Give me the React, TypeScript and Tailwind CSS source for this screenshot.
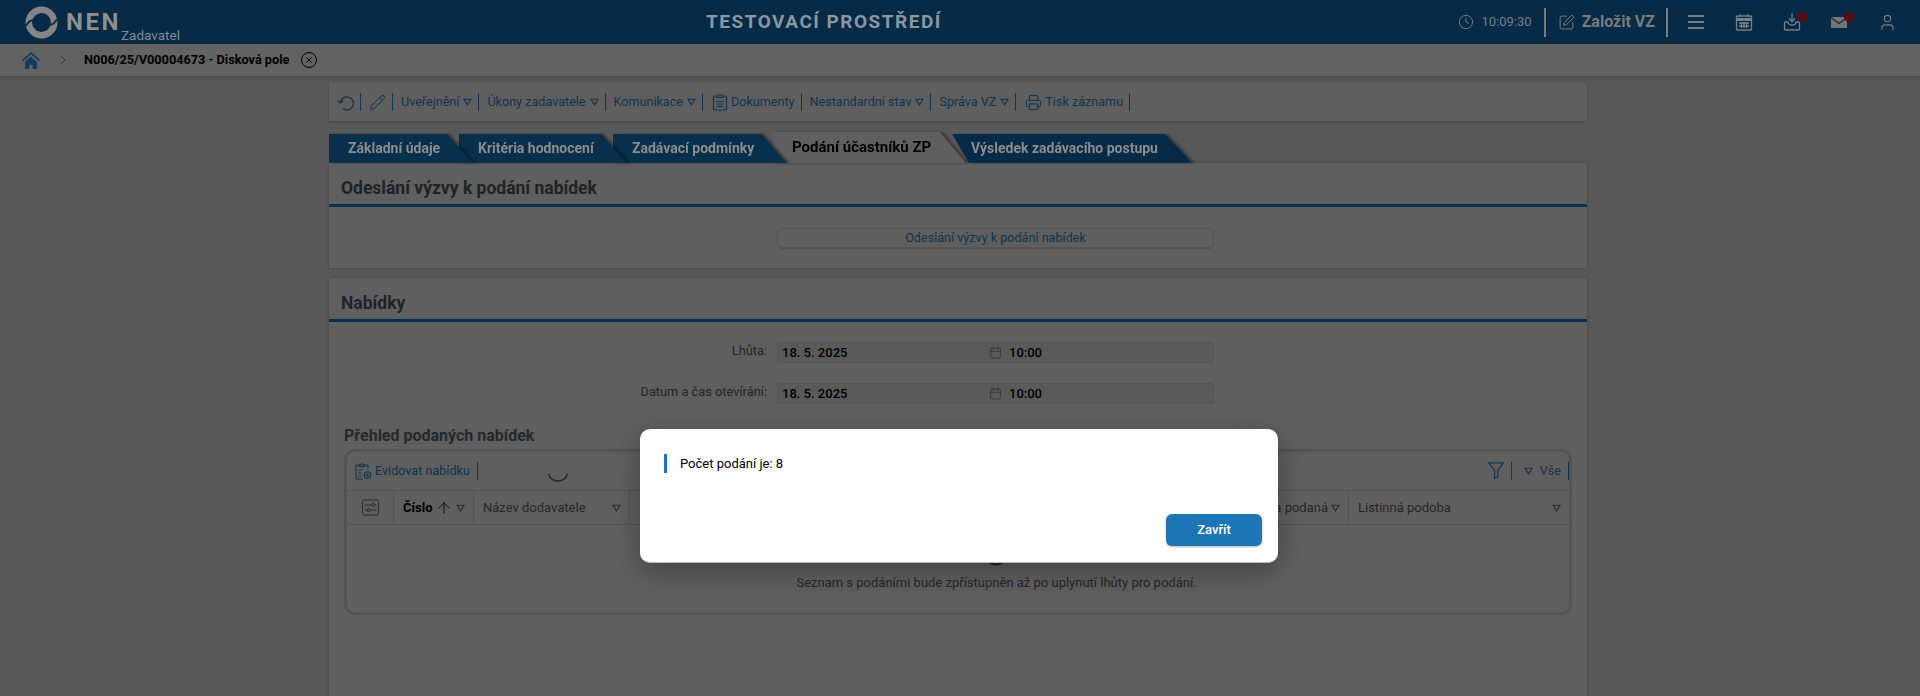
import React from 'react';
import { Clock, SquarePen, User, ChevronRight, Pencil, Printer, ArrowUp, Calendar, X } from 'lucide-react';

const Tri = ({ className = 'text-[#10344e]' }: { className?: string }) => (
  <svg width="9" height="8" viewBox="0 0 9 8" className={className} fill="none" stroke="currentColor" strokeWidth="1.1">
    <path d="M1 1.2h7L4.5 7z" />
  </svg>
);

const Sep = ({ ml = 'ml-[6px]' }: { ml?: string }) => <span className={`${ml} w-px h-[18px] bg-[#10344e]`} />;

const RefreshIcon = () => (
  <svg width="17" height="17" viewBox="0 0 17 17" fill="none" stroke="currentColor" strokeWidth="1.2">
    <path d="M3.5 9A6.5 6.5 0 1 1 6 14.5" />
    <path d="M1 6.5L3.5 9 6 6.5" />
  </svg>
);

const ClipIcon = () => (
  <svg width="16" height="18" viewBox="0 0 16 18" fill="none" stroke="currentColor" strokeWidth="1.2">
    <path d="M5 3H2.5a1 1 0 0 0-1 1v12a1 1 0 0 0 1 1h11a1 1 0 0 0 1-1V4a1 1 0 0 0-1-1H11" />
    <path d="M5 4.5V3h1.5a1.5 1.5 0 0 1 3 0H11v1.5zM4.5 8.5h7M4.5 11h7M4.5 13.5h7" />
  </svg>
);

const EvidIcon = () => (
  <svg width="17" height="18" viewBox="0 0 17 18" fill="none" stroke="currentColor" strokeWidth="1.1">
    <path d="M4.5 3H2a1 1 0 0 0-1 1v12a1 1 0 0 0 1 1h6M9.5 3H12a1 1 0 0 1 1 1v3.5" />
    <path d="M4.5 4.5V3H6a1.2 1.2 0 0 1 2.4 0h1.1v1.5zM3.5 8h4M3.5 11h3M3.5 14h3" />
    <circle cx="12.5" cy="13" r="3.2" />
    <circle cx="12.5" cy="13" r="1" />
  </svg>
);

const FilterIcon = () => (
  <svg width="16" height="17" viewBox="0 0 16 17" fill="none" stroke="currentColor" strokeWidth="1.2">
    <path d="M0.8 1h14.4L9.8 8.5V15L6.6 16.5V8.5z" />
  </svg>
);

const ColumnsIcon = () => (
  <svg width="17" height="17" viewBox="0 0 17 17" fill="none" stroke="#2c2c2c" strokeWidth="1">
    <rect x="0.5" y="1" width="16" height="15" rx="1.5" />
    <path d="M3 6h6.5M13 6h1.5M3 11h1.5M8 11h6.5" />
    <circle cx="11.2" cy="6" r="1.5" />
    <circle cx="6.2" cy="11" r="1.5" />
  </svg>
);

const tabs = [
  { label: 'Základní údaje', w: 'w-[144px]', z: 'z-50' },
  { label: 'Kritéria hodnocení', w: 'w-[168px]', z: 'z-40' },
  { label: 'Zadávací podmínky', w: 'w-[174px]', z: 'z-30' },
];

const Panel = ({ title, children, className }: { title: string; children: React.ReactNode; className: string }) => (
  <section className={`bg-[#5f5f5f] shadow-[0_0_3px_rgba(0,0,0,0.25)] ${className}`}>
    <div className="h-[30px] pl-3 pt-[11px] flex items-center border-b-[3px] border-[#08304c] box-content">
      <h2 className="text-[17.5px] font-bold text-[#1e2328] leading-none">{title}</h2>
    </div>
    {children}
  </section>
);

const DateRow = ({ label, mt }: { label: string; mt: string }) => (
  <div className={`flex items-center ${mt}`}>
    <span className="w-[438px] text-right text-[12.8px] text-[#262626] -mt-1">{label}</span>
    <div className="ml-[10px] w-[437px] h-[21px] rounded-[3px] border border-[#545454] bg-[#5a5a5a] flex items-center pl-[4px] text-[13px] font-medium text-black">
      <span className="w-[207px]">18. 5. 2025</span>
      <Calendar size={13} strokeWidth={1.2} className="text-[#2c2c2c]" />
      <span className="ml-[7px]">10:00</span>
    </div>
  </div>
);

const Col = ({ w, children, bold }: { w: string; children: React.ReactNode; bold?: boolean }) => (
  <div className={`${w} h-full flex items-center border-r border-[#525452] pl-[9px] pr-2 text-[13px] ${bold ? 'font-bold text-black' : 'text-[#262626]'}`}>
    {children}
  </div>
);

export default function App() {
  return (
    <div className="relative h-[696px] w-full overflow-hidden bg-[#585858] font-['Roboto',sans-serif]">
      {/* header */}
      <header className="h-11 bg-[#072b47] flex items-center text-[#747f87]">
        <div className="w-[190px] flex items-center pl-[25px] relative h-full">
          <svg width="33" height="33" viewBox="0 0 33 33" fill="none">
            <circle cx="16.5" cy="16.5" r="12.7" stroke="#858585" strokeWidth="6.6" />
            <path d="M1 20C3 16 5 14 9 14" stroke="#072b47" strokeWidth="1.8" />
            <path d="M32 13C30 17 28 19 24 19" stroke="#072b47" strokeWidth="1.8" />
          </svg>
          <span className="ml-2 text-[24px] font-bold tracking-[2.5px] leading-none text-[#909090]">NEN</span>
          <span className="absolute left-[121px] top-[27px] text-[13.5px] leading-4 text-[#7d8a94]">Zadavatel</span>
        </div>
        <div className="ml-[516px] w-[240px] text-[19px] font-bold tracking-[1.5px] text-[#8a96a0] whitespace-nowrap">TESTOVACÍ PROSTŘEDÍ</div>
        <div className="ml-auto flex items-center h-full">
          <Clock size={16} strokeWidth={1.4} />
          <span className="ml-2 text-[13px]">10:09:30</span>
          <span className="ml-3 w-0.5 h-[29px] bg-[#7a7a7a]" />
          <SquarePen size={17} strokeWidth={1.4} className="ml-3" />
          <span className="ml-[7px] text-[16px] font-bold text-[#7a7a7a]">Založit VZ</span>
          <span className="ml-[11px] w-0.5 h-[29px] bg-[#7a7a7a]" />
          <svg width="20" height="20" viewBox="0 0 20 20" className="ml-[18px]" stroke="currentColor" strokeWidth="2">
            <path d="M2 4h16M2 10h16M2 16h16" />
          </svg>
          <svg width="18" height="18" viewBox="0 0 18 18" className="ml-[29px]" fill="none" stroke="currentColor" strokeWidth="1.3">
            <rect x="1.5" y="3" width="15" height="14" rx="1" />
            <path d="M1.5 6.5h15" strokeWidth="3" />
            <path d="M5 1v3M13 1v3M4 10h10M4 13h10M6.5 9v6M9 9v6M11.5 9v6" />
          </svg>
          <div className="relative ml-[30px] w-[18px] h-[18px]">
            <svg width="18" height="18" viewBox="0 0 18 18" fill="none" stroke="currentColor" strokeWidth="1.3">
              <path d="M9 0v8M6 5.5l3 3 3-3" />
              <path d="M5 9H2.5a1 1 0 0 0-1 1v6a1 1 0 0 0 1 1h13a1 1 0 0 0 1-1v-6a1 1 0 0 0-1-1H13c0 2-2 3-4 3s-4-1-4-3z" />
            </svg>
            <span className="absolute -right-[6px] -top-[1px] w-[10px] h-[10px] rounded-full bg-[#5a0e12]" />
          </div>
          <div className="relative ml-[29px] w-[18px] h-[18px]">
            <svg width="18" height="18" viewBox="0 0 18 18">
              <path d="M1 4h16v11H1z" fill="#747474" />
              <path d="M1 4.5l8 6 8-6" fill="none" stroke="#072b47" strokeWidth="1.2" />
            </svg>
            <span className="absolute -right-[6px] -top-[1px] w-[10px] h-[10px] rounded-full bg-[#5a0e12]" />
          </div>
          <User size={19} strokeWidth={1.4} className="ml-[30px] mr-[23px]" />
        </div>
      </header>

      {/* breadcrumb */}
      <nav className="h-8 bg-[#626262] flex items-center shadow-[0_2px_4px_rgba(0,0,0,0.15)] relative">
        <svg width="18" height="17" viewBox="0 0 17 16" className="ml-[22px] text-[#0c3c60]" fill="currentColor">
          <path d="M8.5 0L0 7.6l1 1.1 7.5-6.6 7.5 6.6 1-1.1zM3 9.2V16h4v-4h3v4h4V9.2L8.5 4.4z" />
        </svg>
        <ChevronRight size={16} strokeWidth={1.1} className="ml-[15px] text-[#2c2c2c]" />
        <span className="ml-[13px] text-[12.7px] font-bold text-black">N006/25/V00004673 - Disková pole</span>
        <span className="ml-[12px] w-4 h-4 rounded-full border border-black flex items-center justify-center">
          <X size={10} strokeWidth={2} className="text-black" />
        </span>
      </nav>

      {/* content */}
      <main className="ml-[329px] w-[1258px] pt-[7px]">
        <div className="h-[38px] bg-[#5f5f5f] shadow-[0_1px_2px_rgba(0,0,0,0.2)] flex items-center text-[12.6px] text-[#10344e] pl-2">
          <RefreshIcon />
          <Sep />
          <Pencil size={17} strokeWidth={1.4} className="ml-2" />
          <Sep />
          <span className="ml-[8px]">Uveřejnění</span><span className="ml-1"><Tri /></span>
          <Sep />
          <span className="ml-[8px]">Úkony zadavatele</span><span className="ml-1"><Tri /></span>
          <Sep />
          <span className="ml-[8px]">Komunikace</span><span className="ml-1"><Tri /></span>
          <Sep />
          <span className="ml-[9px]"><ClipIcon /></span>
          <span className="ml-[3px]">Dokumenty</span>
          <Sep />
          <span className="ml-[8px]">Nestandardní stav</span><span className="ml-1"><Tri /></span>
          <Sep />
          <span className="ml-[8px]">Správa VZ</span><span className="ml-1"><Tri /></span>
          <Sep />
          <Printer size={17} strokeWidth={1.4} className="ml-[9px]" />
          <span className="ml-[3px]">Tisk záznamu</span>
          <Sep />
        </div>

        {/* tabs */}
        <div className="mt-[11px] h-[31px] flex items-end relative">
          {tabs.map((t, i) => (
            <div key={t.label} className={`relative ${t.z} ${i > 0 ? '-ml-[14px]' : ''} drop-shadow-[3px_0_1px_rgba(0,0,0,0.35)]`}>
              <div className={`${t.w} h-[29px] bg-[#08304c] [clip-path:polygon(0_0,calc(100%-26px)_0,100%_100%,0_100%)] flex items-center pl-[19px] text-[14px] font-bold text-[#8c8c8c] whitespace-nowrap`}>
                {t.label}
              </div>
            </div>
          ))}
          <div className="relative z-20 -ml-[14px] drop-shadow-[3px_0_1px_rgba(0,0,0,0.35)]">
            <div className="w-[193px] h-[31px] bg-[#5f5f5f] [clip-path:polygon(0_0,calc(100%-26px)_0,100%_100%,0_100%)] flex items-center pl-[19px] text-[15px] font-bold text-black whitespace-nowrap">
              Podání účastníků ZP
            </div>
          </div>
          <div className="relative z-10 -ml-[14px] drop-shadow-[3px_0_1px_rgba(0,0,0,0.35)]">
            <div className="w-[240px] h-[29px] bg-[#072b47] [clip-path:polygon(0_0,calc(100%-27px)_0,100%_100%,17px_100%)] flex items-center pl-[19px] text-[14px] font-bold text-[#8c8c8c] whitespace-nowrap">
              Výsledek zadávacího postupu
            </div>
          </div>
        </div>

        <Panel title="Odeslání výzvy k podání nabídek" className="h-[105px]">
          <div className="pt-[18px] pl-[448px]">
            <button className="w-[437px] h-5 rounded-[5px] border border-[#555] shadow-[0_1px_1px_rgba(0,0,0,0.15)] text-[12.6px] text-[#10344e] leading-none">Odeslání výzvy k podání nabídek</button>
          </div>
        </Panel>

        <Panel title="Nabídky" className="mt-[10px] h-[420px]">
          <DateRow label="Lhůta:" mt="mt-5" />
          <DateRow label="Datum a čas otevírání:" mt="mt-[20px]" />
          <div className="mt-[22px] ml-[15px] text-[16px] font-bold text-[#232a30] leading-5">Přehled podaných nabídek</div>
          <div className="mt-[3px] ml-[15px] w-[1228px] h-[166px] rounded-[10px] border-[3px] border-[#525452] relative">
            <div className="h-[39px] flex items-center text-[12.6px] text-[#10344e] pl-2 border-b border-[#525452]">
              <EvidIcon />
              <span className="ml-[3px]">Evidovat nabídku</span>
              <Sep ml="ml-[7px]" />
              <div className="ml-auto flex items-center">
                <FilterIcon />
                <Sep ml="ml-[7px]" />
                <span className="ml-[12px]"><Tri /></span>
                <span className="ml-[7px]">Vše</span>
                <Sep ml="ml-[7px]" />
              </div>
            </div>
            <div className="h-[34px] flex items-center border-b border-[#525452]">
              <div className="w-[47px] h-full flex items-center justify-center border-r border-[#525452]">
                <ColumnsIcon />
              </div>
              <Col w="w-[80px]" bold>Číslo<ArrowUp size={18} strokeWidth={1.2} className="ml-0.5" /><span className="ml-[3px]"><Tri className="text-[#2c2c2c]" /></span></Col>
              <Col w="w-[156px]"><span className="flex-1">Název dodavatele</span><Tri className="text-[#2c2c2c]" /></Col>
              <Col w="w-[719px]"><span className="flex-1 text-right pr-[3px]">Nabídka podaná</span><Tri className="text-[#2c2c2c]" /></Col>
              <div className="flex-1 h-full flex items-center pl-[9px] pr-2 text-[13px] text-[#262626]"><span className="flex-1">Listinná podoba</span><Tri className="text-[#2c2c2c]" /></div>
            </div>
            <p className="pt-[50px] pl-[77px] text-center text-[13px] text-[#262626] leading-4">Seznam s podáními bude zpřístupněn až po uplynutí lhůty pro podání.</p>
          </div>
        </Panel>
      </main>

      {/* loading arcs */}
      <svg className="absolute left-[546px] top-[460px]" width="24" height="24" viewBox="0 0 24 24" fill="none" stroke="#2a2a2a" strokeWidth="1.6">
        <path d="M2.5 14a10 10 0 0 0 19 0" />
      </svg>
      <svg className="absolute left-[983px] top-[540px]" width="26" height="26" viewBox="0 0 26 26" fill="none" stroke="#1f1f1f" strokeWidth="2">
        <circle cx="13" cy="13" r="11.5" />
      </svg>

      {/* dialog */}
      <div className="absolute left-[640px] top-[429px] w-[638px] h-[134px] bg-white rounded-[10px] shadow-[0_8px_30px_rgba(0,0,0,0.3)] border-b border-[#bbb] pt-[25px] pl-6 pr-4">
        <div className="border-l-[3px] border-[#1a6fd0] h-[19px] pl-[13px] flex items-center text-[13px] text-black">Počet podání je: 8</div>
        <div className="mt-[41px] flex justify-end">
          <button className="w-24 h-8 rounded-md bg-[#1c75b5] text-white text-[13px] font-medium shadow-[0_1px_2px_rgba(0,0,0,0.3)]">Zavřít</button>
        </div>
      </div>
    </div>
  );
}
